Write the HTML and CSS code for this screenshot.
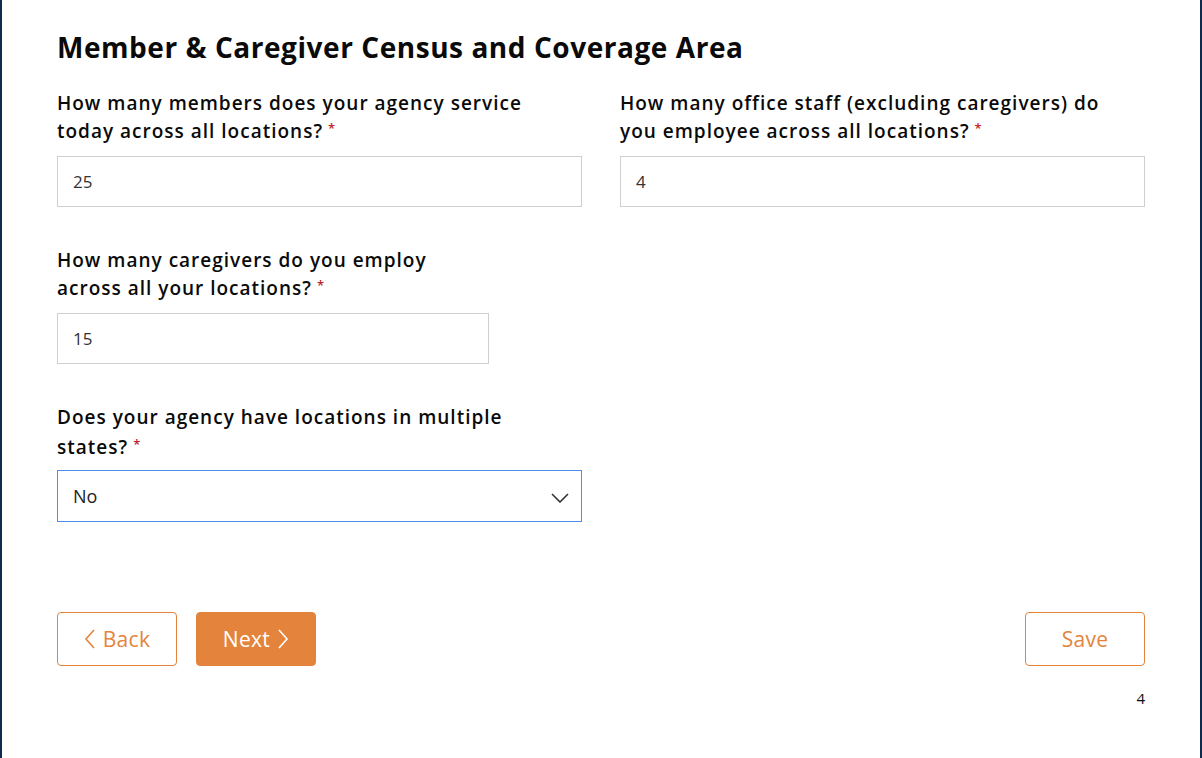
FILE: index.html
```html
<!DOCTYPE html>
<html lang="en">
<head>
<meta charset="utf-8">
<title>Member &amp; Caregiver Census and Coverage Area</title>
<link rel="stylesheet" href="styles.css">
</head>
<body>
<div class="frame">
  <main class="page">
    <h1 class="title">Member &amp; Caregiver Census and Coverage Area</h1>
    <div class="row two">
      <div class="field">
        <label class="label w1">How many members does your agency service today across all locations?<span class="req">*</span></label>
        <div class="input">25</div>
      </div>
      <div class="field">
        <label class="label w2">How many office staff (excluding caregivers) do you employee across all locations?<span class="req">*</span></label>
        <div class="input">4</div>
      </div>
    </div>
    <div class="field narrow">
      <label class="label w3">How many caregivers do you employ across all your locations?<span class="req">*</span></label>
      <div class="input">15</div>
    </div>
    <div class="field half">
      <label class="label w4 tall">Does your agency have locations in multiple states?<span class="req">*</span></label>
      <div class="input select"><span>No</span>
        <svg class="chev" width="18" height="10" viewBox="0 0 18 10"><path d="M1 1 L9 9 L17 1" fill="none" stroke="#333" stroke-width="1.6"/></svg>
      </div>
    </div>
    <div class="actions">
      <div class="left-actions">
        <button class="btn outline"><svg width="11" height="20" viewBox="0 0 11 20"><path d="M10 1 L2 10 L10 19" fill="none" stroke="currentColor" stroke-width="1.6"/></svg>Back</button>
        <button class="btn solid">Next<svg width="11" height="20" viewBox="0 0 11 20"><path d="M1 1 L9 10 L1 19" fill="none" stroke="currentColor" stroke-width="1.6"/></svg></button>
      </div>
      <button class="btn outline">Save</button>
    </div>
    <div class="pagenum">4</div>
  </main>
</div>
</body>
</html>
```
FILE: styles.css
```css
html, body { margin: 0; padding: 0; background: #fff; }
body { font-family: "Open Sans", "Lato", sans-serif; color: #111; }
.frame {
  width: 1202px; height: 758px; box-sizing: border-box;
  border-left: 2px solid #0e2a4c; border-right: 2px solid #0e2a4c;
  overflow: hidden;
}
.page { padding: 27px 55px 0 55px; }
.title { margin: 0 0 22px; font-size: 28px; font-weight: 700; line-height: 40px; color: #0a0a0a; letter-spacing: 0.55px; }
.row.two { display: grid; grid-template-columns: 525px 525px; column-gap: 38px; }
.field { display: flex; flex-direction: column; margin-bottom: 39px; }
.narrow { width: 432px; margin-bottom: 38px; }
.half { width: 525px; margin-bottom: 0; }
.label { font-size: 19px; font-weight: 600; line-height: 28px; color: #0a0a0a; margin-bottom: 11px; letter-spacing: 1px; }
.w1 { max-width: 495px; }
.w2 { max-width: 500px; }
.w3 { max-width: 400px; }
.w4 { max-width: 475px; }
.label.tall { line-height: 30px; margin-bottom: 8px; }
.req { color: #c0262c; font-size: 13px; line-height: 0; vertical-align: 5px; margin-left: 5px; }
.input {
  height: 51px; box-sizing: border-box; border: 1px solid #cfcfcf;
  padding: 0 15px; display: flex; align-items: center;
  font-size: 17px; color: #333;
}
.select { border-color: #4a90e2; justify-content: space-between; height: 52px; padding-right: 12px; font-size: 18px; color: #222; }
.chev { display: block; margin-top: 4px; }
.actions { display: flex; justify-content: space-between; margin-top: 90px; }
.left-actions { display: flex; gap: 19px; }
.btn {
  width: 120px; height: 54px; border-radius: 4px; box-sizing: border-box;
  font-family: inherit; font-size: 21px; letter-spacing: 0.3px; display: flex; align-items: center; justify-content: center; gap: 8px;
  cursor: pointer; padding: 0;
}
.outline { background: #fff; border: 1px solid #e4843c; color: #e4843c; }
.solid { background: #e4843c; border: 1px solid #e4843c; color: #fff; }
.pagenum { text-align: right; font-size: 15px; color: #111; margin-top: 22px; padding-right: 0; }
```
